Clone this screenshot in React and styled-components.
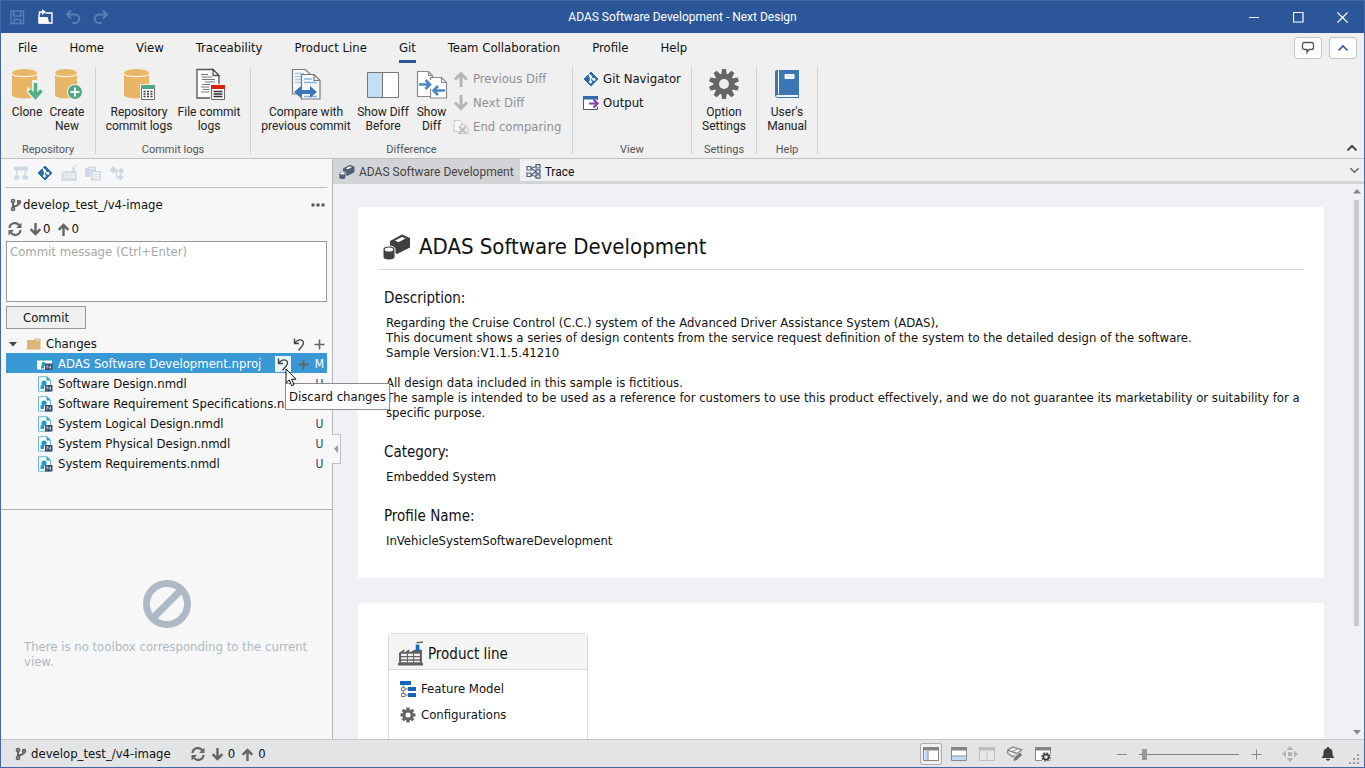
import React from "react";
import styled, { createGlobalStyle } from "styled-components";

const UI = `"DejaVu Sans Condensed", "DejaVu Sans", sans-serif`;
const SMALL = `Roboto, "Open Sans", sans-serif`;

const Global = createGlobalStyle`
  * { box-sizing: border-box; }
  body { margin: 0; overflow: hidden; }
  button, textarea, input { font: inherit; color: inherit; }
  button { background: none; border: 0; padding: 0; margin: 0; }
  svg { display: block; flex: none; }
`;

const Window = styled.div`
  display: grid;
  grid-template-rows: auto auto minmax(0, 1fr) auto;
  height: 100vh;
  border: 1px solid #3f68a5;
  font: 13px/20px ${UI};
  color: #111;
  background: #f0f0f0;
`;

/* title bar */
const TitleBar = styled.header`
  display: grid;
  grid-template-columns: 1fr auto 1fr;
  align-items: center;
  height: 32px;
  background: #2b579a;
  color: #fff;
  font: 12px/16px ${SMALL};
`;
const QuickAccess = styled.div`
  display: flex;
  gap: 12px;
  padding-left: 8px;
`;
const QuickButton = styled.button`
  color: ${(p) => (p.$dim ? "#5a7eb5" : "#fff")};
`;
const WindowButtons = styled.div`
  display: flex;
  justify-content: flex-end;
`;
const WindowButton = styled.button`
  display: grid;
  place-items: center;
  width: 44px;
  height: 32px;
`;

/* ribbon */
const Ribbon = styled.div`
  border-bottom: 1px solid #bfbfbf;
`;
const MenuRow = styled.nav`
  display: flex;
  height: 30px;
  padding-left: 1px;
`;
const MenuTab = styled.button`
  display: flex;
  flex-direction: column;
  justify-content: flex-end;
  gap: 2px;
  padding: 0 16px;
  &::after {
    content: "";
    height: 3px;
    background: ${(p) => (p.$active ? "#2b579a" : "transparent")};
  }
`;
const MenuTools = styled.div`
  display: flex;
  align-items: center;
  gap: 7px;
  margin-left: auto;
  padding-right: 7px;
`;
const ToolButton = styled.button`
  display: grid;
  place-items: center;
  width: 28px;
  height: 22px;
  background: #fff;
  border: 1px solid #c2c2c2;
  border-radius: 3px;
`;
const RibbonBody = styled.div`
  display: flex;
  height: 95px;
  padding: 4px 0;
`;
const Group = styled.section`
  display: grid;
  grid-template-rows: minmax(0, 1fr) 8px;
  width: ${(p) => p.$width}px;
  border-right: 1px solid #d2d2d2;
  font: 12px/14px ${SMALL};
`;
const GroupItems = styled.div`
  display: flex;
  justify-content: ${(p) => (p.$center ? "center" : "flex-start")};
  padding-left: ${(p) => (p.$center ? 0 : 5)}px;
`;
const GroupLabel = styled.h2`
  margin: 0;
  text-align: center;
  font: 11px/8px ${SMALL};
  color: #555;
`;
const BigButton = styled.button`
  display: flex;
  flex-direction: column;
  align-items: center;
  justify-content: flex-start;
  gap: 5px;
  width: ${(p) => p.$width}px;
  padding-top: 1px;
  color: #222;
  white-space: nowrap;
`;
const SmallList = styled.div`
  display: flex;
  flex-direction: column;
  font: 13px/24px ${UI};
`;
const SmallButton = styled.button`
  display: flex;
  align-items: center;
  gap: 4px;
  height: 24px;
  color: ${(p) => (p.disabled ? "#8f8f8f" : "#111")};
  white-space: nowrap;
`;
const CollapseButton = styled.button`
  align-self: flex-end;
  margin: 0 6px 0 auto;
`;

/* body */
const Body = styled.div`
  display: grid;
  grid-template-columns: 332px minmax(0, 1fr);
  grid-template-rows: minmax(0, 1fr);
  min-height: 0;
`;
const Side = styled.aside`
  position: relative;
  z-index: 2;
  display: grid;
  grid-template-rows: 351px minmax(0, 1fr);
  border-right: 1px solid #b5b5b8;
  background: #f7f7f7;
`;
const GitPane = styled.div`
  padding: 0 5px;
  border-bottom: 1px solid #b0b0b0;
`;
const SideTools = styled.div`
  display: flex;
  align-items: center;
  gap: 8px;
  height: 29px;
  padding: 0 7px;
  border-bottom: 1px solid #bdbdbd;
`;
const BranchRow = styled.div`
  display: flex;
  align-items: center;
  gap: 1px;
  height: 33px;
  padding: 0 2px 0 4px;
`;
const MoreButton = styled.button`
  margin-left: auto;
`;
const SyncRow = styled.div`
  display: flex;
  align-items: center;
  height: 20px;
  padding: 0 2px 4px;
  gap: 7px;
`;
const SyncButton = styled.button`
  display: flex;
  align-items: center;
  gap: ${(p) => p.$gap ?? 1}px;
  color: #111;
`;
const Message = styled.textarea`
  display: block;
  width: 100%;
  height: 61px;
  padding: 0 3px;
  border: 1px solid #999;
  border-radius: 0;
  background: #fff;
  resize: none;
  outline: 0;
  &::placeholder { color: #a8a8a8; }
`;
const CommitButton = styled.button`
  width: 80px;
  height: 23px;
  margin: 4px 0;
  border: 1px solid #999;
  background: #f0f0f0;
`;
const Tree = styled.ul`
  margin: 0;
  padding: 0;
  list-style: none;
`;
const TreeRow = styled.li`
  position: relative;
  display: flex;
  align-items: center;
  gap: 5px;
  height: 20px;
  padding: 2px 0 0 ${(p) => (p.$child ? 31 : 3)}px;
  background: ${(p) => (p.$selected ? "#3998d6" : "transparent")};
  color: ${(p) => (p.$selected ? "#fff" : "#111")};
`;
const Twisty = styled.button`
  padding-right: 5px;
`;
const FileName = styled.span`
  flex: 1;
  min-width: 0;
  overflow: hidden;
  white-space: nowrap;
`;
const RowActions = styled.span`
  display: flex;
  align-items: center;
  gap: 4px;
`;
const RowButton = styled.button`
  display: grid;
  place-items: center;
  width: 16px;
  height: 16px;
  background: ${(p) => (p.$hot ? "#e9f3fa" : "transparent")};
  color: #555;
`;
const Status = styled.span`
  width: 16px;
  margin-left: ${(p) => (p.$tight ? -4 : 0)}px;
  text-align: center;
  font-size: 12px;
  color: ${(p) => (p.$selected ? "#fff" : "#1d4a66")};
`;
const Tooltip = styled.div`
  position: absolute;
  left: 279px;
  top: 30px;
  z-index: 3;
  padding: 2px 3px;
  border: 1px solid #8c8c8c;
  background: #fff;
  color: #111;
  line-height: 21px;
  white-space: nowrap;
`;
const Pointer = styled.svg`
  position: absolute;
  left: 279px;
  top: 15px;
  z-index: 4;
`;
const Toolbox = styled.div`
  display: flex;
  flex-direction: column;
  align-items: center;
  padding: 70px 23px 0;
  gap: 11px;
  color: #adb9c6;
  line-height: 15px;
`;
const ToolboxText = styled.p`
  margin: 0;
  width: 100%;
`;
const Handle = styled.button`
  position: absolute;
  left: 100%;
  top: 275px;
  display: grid;
  place-items: center;
  width: 9px;
  height: 30px;
  border: 1px solid #bdbdbd;
  border-left: 0;
  background: #f7f7f7;
`;

const Main = styled.main`
  display: grid;
  grid-template-rows: 25px minmax(0, 1fr);
  min-width: 0;
`;
const DocTabs = styled.div`
  display: flex;
  border-bottom: 3px solid #d3d4d7;
  font: 12px/22px ${SMALL};
`;
const DocTab = styled.button`
  display: flex;
  align-items: center;
  gap: 4px;
  height: 22px;
  padding: 3px 6px 0;
  background: ${(p) => (p.$active ? "#d3d4d7" : "transparent")};
  color: ${(p) => (p.$active ? "#444" : "#111")};
`;
const TabMenu = styled.button`
  margin: 0 4px 0 auto;
`;
const Canvas = styled.div`
  display: grid;
  grid-template-columns: minmax(0, 1fr) 13px;
  grid-template-rows: minmax(0, 1fr);
  min-height: 0;
  background: #f0f1f5;
`;
const Pages = styled.div`
  overflow: hidden;
  padding: 23px 27px 0 25px;
`;
const Page = styled.article`
  margin-bottom: 25px;
  padding: 0 20px 30px;
  border-radius: 2px;
  background: #fff;
`;
const PageHead = styled.header`
  display: flex;
  align-items: center;
  gap: 8px;
  height: 63px;
  padding: 18px 5px 0;
  border-bottom: 1px solid #dcdcdc;
`;
const PageTitle = styled.h1`
  margin: 0;
  font: 22px/44px ${UI};
`;
const Field = styled.section`
  padding-left: 6px;
  margin-top: ${(p) => (p.$first ? 18 : 22)}px;
`;
const FieldName = styled.h2`
  margin: 0 0 7px;
  font: 15px/20px ${UI};
`;
const FieldText = styled.p`
  margin: 0;
  padding-left: 2px;
  line-height: 15px;
  white-space: pre-line;
`;
const ShelfPage = styled(Page)`
  padding: 30px;
`;
const Shelf = styled.section`
  width: 200px;
  height: 160px;
  border: 1px solid #dadada;
  border-radius: 4px;
`;
const ShelfHead = styled.h2`
  display: flex;
  align-items: center;
  gap: 5px;
  height: 36px;
  margin: 0 0 6px;
  padding: 4px 9px 0;
  border-bottom: 1px solid #dadada;
  background: #f5f5f5;
  font: 15px/30px ${UI};
`;
const ShelfLink = styled.a`
  display: flex;
  align-items: center;
  gap: 5px;
  height: 26px;
  padding-left: 11px;
  color: #111;
  text-decoration: none;
`;
const ScrollTrack = styled.div`
  display: flex;
  flex-direction: column;
  align-items: center;
  gap: 6px;
  padding: 5px 2px 4px 0;
`;
const ScrollThumb = styled.div`
  flex: 0 1 426px;
  width: 5px;
  margin-bottom: auto;
  background: #c9cacd;
`;

/* status bar */
const StatusBar = styled.footer`
  display: flex;
  align-items: center;
  height: 28px;
  padding-top: 1px;
  border-top: 1px solid #c6c6c6;
  background: #e3e4e6;
`;
const StatusLeft = styled.div`
  display: flex;
  align-items: center;
  gap: 4px;
  padding-left: 14px;
`;
const StatusSync = styled.div`
  display: flex;
  align-items: center;
  gap: 6px;
  padding-left: 20px;
`;
const StatusRight = styled.div`
  display: flex;
  align-items: center;
  margin-left: auto;
  padding-right: 4px;
`;
const ViewButton = styled.button`
  display: grid;
  place-items: center;
  width: 22px;
  height: 22px;
  margin-right: 6px;
  border: 1px solid ${(p) => (p.$on ? "#adadad" : "transparent")};
  border-radius: 2px;
  background: ${(p) => (p.$on ? "#f0f0f0" : "transparent")};
`;
const Zoom = styled.div`
  display: flex;
  align-items: center;
  gap: 12px;
  margin: 0 20px 0 57px;
`;
const ZoomSlider = styled.input`
  appearance: none;
  width: 100px;
  height: 12px;
  margin: 0;
  background: linear-gradient(#808080, #808080) center / 100% 1px no-repeat;
  &::-webkit-slider-thumb {
    appearance: none;
    width: 5px;
    height: 11px;
    background: #999;
  }
`;
const BellButton = styled.button`
  margin: 0 14px 0 23px;
`;
const Corner = styled.svg`
  align-self: flex-end;
`;

/* ---------- icons ---------- */
const Svg = ({ w = 16, h = w, children, ...rest }) => (
  <svg width={w} height={h} viewBox={`0 0 ${w} ${h}`} fill="none" aria-hidden="true" {...rest}>
    {children}
  </svg>
);

const SaveIcon = () => (
  <Svg>
    <path d="M2 2h12.500v12.500H2zM4.500 2v5h7.500V2M5 14.500v-4h6.500v4" stroke="currentColor" strokeWidth="1.500" />
  </Svg>
);
const OpenIcon = () => (
  <Svg>
    <path d="M2 5.500V14h13V4H8.500" stroke="currentColor" strokeWidth="1.400" />
    <path d="M1.500 8h9l2 6.500H2z" fill="currentColor" />
    <path d="M2.500 6V3h4" stroke="currentColor" strokeWidth="1.500" />
    <path d="M5 0l4 3-4 3z" fill="currentColor" />
  </Svg>
);
const UndoIcon = ({ flip }) => (
  <Svg>
    <g transform={flip ? "matrix(-1 0 0 1 16 0)" : undefined} stroke="currentColor" strokeWidth="2">
      <path d="M6 1.500L2 5.500l4 4M2 5.500h8a4 4 0 0 1 0 8.500H7.500" />
    </g>
  </Svg>
);
const Barrel = ({ x = 0, w = 25 }) => (
  <g>
    <path d={`M${x} 6v21c0 4.500 ${w} 4.500 ${w} 0V6z`} fill="#e9b667" />
    <ellipse cx={x + w / 2} cy="5" rx={w / 2} ry="4" fill="#e9b667" />
    <path d={`M${x} 6c1 3.500 ${w - 1} 3.500 ${w} 0`} stroke="#fdf3e2" strokeWidth="1.200" />
  </g>
);
const CloneIcon = () => (
  <Svg w={32}>
    <Barrel x={1} />
    <path d="M22 13h5v10l3-2.500 2 3L24.500 32 17 24v-3.500l5 3z" stroke="#f0f0f0" strokeWidth="2" fill="#f0f0f0" />
    <path d="M24.500 15v14M18.500 22.500l6 6.500 6-6.500" stroke="#4fb283" strokeWidth="3.600" />
  </Svg>
);
const CreateIcon = () => (
  <Svg w={32}>
    <Barrel x={4} w={22} />
    <circle cx="24" cy="24" r="8" fill="#f0f0f0" />
    <circle cx="24" cy="24" r="7" fill="#4fa985" />
    <path d="M24 19.500v9M19.500 24h9" stroke="#fff" strokeWidth="1.800" />
  </Svg>
);
const MiniTable = ({ color, dots }) => (
  <g>
    <path d="M17 16h15v16H17z" fill="#f0f0f0" />
    <path d="M18.500 18.500h13v13h-13z" fill="#fff" stroke="#6a6a6a" />
    <path d="M18 17h14v4H18z" fill={color} />
    <path d="M20.500 23.500h9M20.500 26h9M20.500 28.500h9" stroke="#333" strokeWidth="1.300" strokeDasharray={dots ? "2 1.500" : undefined} />
  </g>
);
const RepoLogIcon = () => (
  <Svg w={32}>
    <Barrel x={1} />
    <MiniTable color="#4fa985" dots />
  </Svg>
);
const FileLogIcon = () => (
  <Svg w={32}>
    <path d="M4 1.500h16l6 6V30H4z" fill="#fff" stroke="#555" strokeWidth="1.300" />
    <path d="M20 1.500v6h6z" fill="#fff" stroke="#555" strokeWidth="1.300" />
    <path d="M8 6.500h7M9 9h10M9 11.500h13M12 14h10M9 16.500h8M8 19h8M10 21.500h6M8 24h8" stroke="#777" strokeWidth="1.200" />
    <MiniTable color="#d9230f" />
  </Svg>
);
const CompareIcon = () => (
  <Svg w={32}>
    <path d="M2.500 1.500h13l5 5V26h-18z" fill="#f4f9fd" stroke="#777" strokeWidth="1.200" />
    <path d="M5 5.500h9M5 8.500h7M5 11.500h6M5 14.500h6" stroke="#a9c9e4" strokeWidth="1.600" />
    <path d="M11.500 6.500H24l6 6V31H11.500z" fill="#f4f9fd" stroke="#777" strokeWidth="1.200" />
    <path d="M24 6.500v6h6" stroke="#777" strokeWidth="1.200" />
    <path d="M14 11h8M14 14.500h13M14 28.500h13" stroke="#8ab4d8" strokeWidth="1.600" />
    <path d="M4 24l7-6v4h9v-4l7 6-7 6v-4h-9v4z" fill="#3c78b8" />
  </Svg>
);
const BeforeIcon = () => (
  <Svg w={32}>
    <path d="M.5 4.500h31v25H.5z" fill="#fff" stroke="#777" />
    <path d="M1 5h15v24H1z" fill="#c2e0f2" />
    <path d="M15.500 5v24" stroke="#777" />
  </Svg>
);
const DiffIcon = () => (
  <Svg w={32}>
    <path d="M1.500 3.500h11l4 4v21h-15z" fill="#fff" stroke="#888" strokeWidth="1.200" />
    <path d="M12.500 3.500v4h4" stroke="#888" strokeWidth="1.200" />
    <path d="M14.500 9.500h11l5 5V30h-16z" fill="#fff" stroke="#888" strokeWidth="1.200" />
    <path d="M25.500 9.500v5h5" stroke="#888" strokeWidth="1.200" />
    <path d="M12 12h5v9h-5z" fill="#fff" />
    <path d="M3 16.500h11M9.500 12l4.500 4.500L9.500 21" stroke="#4a86c5" strokeWidth="2.600" />
    <path d="M29 22.500H17M22 18l-4.500 4.500L22 27" stroke="#4a86c5" strokeWidth="2.600" />
  </Svg>
);
const ArrowIcon = ({ down, size = 16, color = "#b5b5b5", sw = 3 }) => (
  <svg width={size} height={size} viewBox="0 0 16 16" fill="none" aria-hidden="true">
    <path
      d={down ? "M8 0v13M2 7.500l6 6 6-6" : "M8 16V3M2 8.500l6-6 6 6"}
      stroke={color}
      strokeWidth={sw}
    />
  </svg>
);
const EndIcon = () => (
  <Svg>
    <path d="M1 1.500h6l2 2v9H1z" fill="#f7f7f7" stroke="#c8c8c8" />
    <path d="M7 5.500h5l3 3v6H5" fill="#eee" stroke="#c8c8c8" />
    <path d="M6 7.500l7 7M13 7.500l-7 7" stroke="#bdbdbd" strokeWidth="2" />
  </Svg>
);
const GitIcon = () => (
  <Svg>
    <path d="M8 1l7 7-7 7-7-7z" fill="#2d6ea8" stroke="#2d6ea8" strokeLinejoin="round" />
    <path d="M5.500 3l2 2v6M7.500 5.500l3 3" stroke="#fff" strokeWidth="1.200" />
    <circle cx="7.500" cy="5.500" r="1.300" fill="#fff" />
    <circle cx="7.500" cy="11" r="1.400" fill="#fff" />
    <circle cx="11" cy="8.500" r="1.400" fill="#fff" />
  </Svg>
);
const OutputIcon = () => (
  <Svg>
    <path d="M.5 2.500h14v12H.5z" fill="#fff" stroke="#555" />
    <path d="M0 1h15v3.500H0z" fill="#2f6cab" />
    <path d="M13 5h3v7h-3z" fill="#f0f0f0" />
    <path d="M6 8.500h9M10.500 4.500l4 4-4 4" stroke="#8240a8" strokeWidth="2.200" />
  </Svg>
);
const Cog = ({ size, color = "#666", teeth = 8, hole = 5, bg = "#f0f0f0" }) => (
  <svg width={size} height={size} viewBox="0 0 32 32" aria-hidden="true">
    {Array.from({ length: teeth }, (_, i) => (
      <path key={i} d={teeth > 8 ? "M14 1h4l1 7h-6z" : "M13 1h6l1 7h-8z"} fill={color} transform={`rotate(${(360 / teeth) * i} 16 16)`} />
    ))}
    <circle cx="16" cy="16" r="10.500" fill={color} />
    <circle cx="16" cy="16" r={hole} fill={bg} />
  </svg>
);
const BookIcon = () => (
  <Svg w={32}>
    <path d="M6 2h22v28H7.500C5 30 4 28.500 4 27V4c0-1.200.8-2 2-2z" fill="#3a76b4" />
    <path d="M7.500 2v24" stroke="#fff" strokeWidth="1" />
    <path d="M5.500 28h21.500" stroke="#f4f4f4" strokeWidth="2" />
    <path d="M14 6.500h9v4h-9z" fill="#e3eaf6" stroke="#fff" />
  </Svg>
);
const BubbleIcon = () => (
  <Svg>
    <path d="M4.500 2.500h7a2 2 0 0 1 2 2v3a2 2 0 0 1-2 2H9L7 12.500v-3H4.500a2 2 0 0 1-2-2v-3a2 2 0 0 1 2-2z" stroke="#555" strokeWidth="1.300" />
  </Svg>
);
const Chevron = ({ up, color, w = 12, sw = 1.6 }) => (
  <svg width={w} height="12" viewBox="0 0 12 12" fill="none" aria-hidden="true">
    <path d={up ? "M1.500 8.500L6 4l4.500 4.500" : "M1.500 4L6 8.500 10.500 4"} stroke={color} strokeWidth={sw} />
  </svg>
);
const HierarchyIcon = () => (
  <Svg>
    <path d="M1 1.500h14v4H1zM1 10.500h5.500v4H1zM9.500 10.500H15v4H9.500z" fill="#ccd9e5" />
    <path d="M3.700 5v6M12.300 5v6" stroke="#ccd9e5" strokeWidth="1.300" />
  </Svg>
);
const FactoryIcon = ({ w = 16, color = "#ccd9e5", chimney = color, grid = "#f7f7f7" }) => (
  <svg width={w} height={w} viewBox="0 0 24 24" fill="none" aria-hidden="true">
    <path d="M0 23.500V21h1V11.500L6 8v3l5-3v3l5-2.500h7V21h1v2.500z" fill={color} />
    <path d="M3 12.300h18v2H3zM3 15.600h18v2H3zM3 18.900h18v1.500H3z" fill={grid} />
    <path d="M9 12v9M15 12v9" stroke={color} />
    <path d="M17 3.500h3.500v6H17z" fill={chimney} />
    <path d="M18 2c2-1.500 3 0 6-1" stroke={color} strokeWidth="1.400" />
  </svg>
);
const CopyIcon = () => (
  <Svg>
    <path d="M0 3h3.500V1.500H11V6H5.500v6H0z" fill="#ccd9e5" />
    <path d="M4.500 3.700H10" stroke="#f7f7f7" />
    <path d="M6.700 6.700h8.500v8H6.700z" stroke="#ccd9e5" strokeWidth="1.500" fill="#f7f7f7" />
    <path d="M8 9.500h6M8 12h6" stroke="#ccd9e5" strokeWidth="1.200" />
  </Svg>
);
const NodesIcon = () => (
  <Svg>
    <path d="M4.500 1L9 5.500l-2.500 2H3L.5 5z" fill="#ccd9e5" />
    <path d="M7 5.500h4M7.500 6v6H11" stroke="#ccd9e5" strokeWidth="1.300" />
    <path d="M12 3l3.500 3L12 9 9 6zM11.500 9l3.500 3-3.500 3.500L8.500 12z" fill="#ccd9e5" />
  </Svg>
);
const BranchIcon = () => (
  <Svg w={12} h={14}>
    <circle cx="3" cy="3" r="1.500" stroke="#606060" strokeWidth="1.700" />
    <circle cx="3" cy="11" r="1.500" stroke="#606060" strokeWidth="1.700" />
    <circle cx="9" cy="4" r="1.400" stroke="#606060" strokeWidth="1.700" />
    <path d="M3 4.500v5M9 5.500c0 2.500-5 2-5.500 4" stroke="#606060" strokeWidth="2" />
  </Svg>
);
const RefreshIcon = () => (
  <Svg w={14}>
    <path d="M1.500 6a5.300 5.300 0 0 1 9.700-2.500M12.500 8a5.300 5.300 0 0 1-9.700 2.500" stroke="#666" strokeWidth="2.200" />
    <path d="M13.500.5v5.500H8zM.5 13.500V8H6z" fill="#666" />
  </Svg>
);
const FolderIcon = () => (
  <Svg w={14} h={12}>
    <path d="M0 2h7l1-1.500h5.500V11.500H0z" fill="#dcb67a" />
    <path d="M8.500 2h4" stroke="#f4e4c8" />
  </Svg>
);
const RevertIcon = () => (
  <Svg w={12} h={13}>
    <path d="M1.500 .5v5H6M2 5C4.500 1 10.500.8 10.500 5c0 3-3.500 4.500-4.800 7.500" stroke="#444" strokeWidth="1.400" />
  </Svg>
);
const PlusIcon = ({ color = "#666", w = 11, sw = 1.6 }) => (
  <svg width={w} height={w} viewBox="0 0 11 11" aria-hidden="true">
    <path d="M5.500 .5v10M.5 5.500h10" stroke={color} strokeWidth={sw} />
  </svg>
);
const ModelIcon = () => (
  <Svg>
    <path d="M1.500.7H10l3.500 3.500v11h-12z" fill="#fff" stroke="#6fb6cf" />
    <path d="M9.500 0v4.500H14z" fill="#2aa0c6" />
    <circle cx="7" cy="7" r="2.600" fill="#1f9cc4" />
    <path d="M3.500 13V9.500L7 8v5z" fill="#1f9cc4" />
    <path d="M8 9h7.500v6.500H8z" fill="#3a4c6b" />
    <path d="M10 13.500v-3l3.500 3v-3" stroke="#c9d2e2" strokeWidth=".9" />
  </Svg>
);
const ProjectIcon = () => (
  <Svg>
    <path d="M0 2h15v11.500H0z" fill="#fff" />
    <path d="M0 2h15v2.500H0z" fill="#23a3c4" />
    <circle cx="6.500" cy="8" r="2" fill="#1f9cc4" />
    <path d="M4 12.500V9.500h3v3z" fill="#1f9cc4" />
    <path d="M8 7.500h7.500v6.500H8z" fill="#3a4c6b" />
    <path d="M10 12.500v-3l3.500 3v-3" stroke="#c9d2e2" strokeWidth=".9" />
  </Svg>
);
const BlocksIcon = ({ w = 14, color = "#4d6078" }) => (
  <svg width={w} height={w} viewBox="0 0 28 28" fill="none" aria-hidden="true">
    <path d="M7 8l12-6.500L27 5v9.500L14 21l-7-3z" fill={color} />
    <path d="M12 7.500l7-3.500 3.500 1.500-7 3.700z" fill="#fff" />
    <path d="M0 16v8c0 4 12 4 12 0v-8c0-4-12-4-12 0z" fill={color} stroke="#fff" />
    <ellipse cx="6" cy="16.500" rx="4.200" ry="2" fill="#fff" />
  </svg>
);
const TraceIcon = () => (
  <Svg w={15}>
    <path d="M1 2.500h4v3.500H1zM1 9h4v3.500H1zM10 .7h4v3.300h-4zM10 5.800h4v3.300h-4zM10 10.900h4v3.300h-4z" stroke="#4d6078" strokeWidth="1.200" />
    <path d="M5 4.500l5-2M5 4.500l5 3M5 11l5-3.500M5 11l5 1.500" stroke="#4d6078" strokeWidth="1.100" />
  </Svg>
);
const FeatureIcon = () => (
  <Svg>
    <path d="M0 0h11v4H0zM8 6h8v4H8zM8 12h8v4H8z" fill="#1565b8" />
    <path d="M1.500 6.700h3.500v3H1.500zM1.500 12.500h3.500v3H1.500zM3.200 4v2.500M3.200 10v2.500M5 8h3M5 14h3" stroke="#777" />
  </Svg>
);
const LayoutIcon = ({ kind }) => (
  <Svg>
    <path d="M.5 1.500h15v13H.5z" fill={kind === "split" ? "#e8e8e8" : "#fff"} stroke={kind === "split" ? "#c0c0c0" : "#888"} />
    <path d="M0 1h16v3.500H0z" fill={kind === "split" ? "#bdbdbd" : "#858585"} />
    {kind === "left" && <path d="M1.500 5h3v9h-3z" fill="#b9dcff" />}
    {kind === "left" && <path d="M5 5v9" stroke="#888" />}
    {kind === "bottom" && <path d="M1 10.500h14V14H1z" fill="#b9dcff" />}
    {kind === "bottom" && <path d="M1 10h14" stroke="#888" />}
    {kind === "split" && <path d="M8 5v9" stroke="#c0c0c0" />}
    {kind === "cog" && <circle cx="11" cy="11" r="5.500" fill="#e3e4e6" />}
    {kind === "cog" && <circle cx="11" cy="11" r="2.600" stroke="#333" strokeWidth="1.500" />}
    {kind === "cog" && <circle cx="11" cy="11" r="3.900" stroke="#333" strokeWidth="1.400" strokeDasharray="1.500 1.560" />}
  </Svg>
);
const SketchIcon = () => (
  <Svg>
    <path d="M.7 4L6 1l9 3-5 3.500zM.7 4v3.500L6 10.500l2-1M2 8l4 3" fill="#f4f4f4" stroke="#808080" strokeWidth="1.200" />
    <path d="M5 6l5-3" stroke="#808080" />
    <path d="M6 15.500l1-4 6-5.500 2.500 3-6 5.500z" fill="#757575" stroke="#e3e4e6" strokeWidth=".7" />
  </Svg>
);
const MoveIcon = () => (
  <Svg>
    <path d="M8 0l3.500 4h-7zM8 16l3.500-4h-7zM0 8l4-3.500v7zM16 8l-4-3.500v7zM6 6h4v4H6z" fill="#b3b3b3" />
  </Svg>
);
const BellIcon = () => (
  <Svg w={14}>
    <path d="M7 0c1 0 1.300.6 1.300 1.300C11 2 11.500 4 11.500 6c0 2.500 1 3.700 2 5H.5c1-1.300 2-2.500 2-5 0-2 .5-4 3.200-4.700C5.700.6 6 0 7 0zM5 11.800h4c0 1-1 1.900-2 1.900s-2-.9-2-1.900z" fill="#404040" />
  </Svg>
);

const files = [
  "Software Design.nmdl",
  "Software Requirement Specifications.nmdl",
  "System Logical Design.nmdl",
  "System Physical Design.nmdl",
  "System Requirements.nmdl",
];
const menus = ["File", "Home", "View", "Traceability", "Product Line", "Git", "Team Collaboration", "Profile", "Help"];

const description = `Regarding the Cruise Control (C.C.) system of the Advanced Driver Assistance System (ADAS),
This document shows a series of design contents from the service request definition of the system to the detailed design of the software.
Sample Version:V1.1.5.41210

All design data included in this sample is fictitious.
The sample is intended to be used as a reference for customers to use this product effectively, and we do not guarantee its marketability or suitability for a specific purpose.`;

const Big = ({ icon, width, lines }) => (
  <BigButton $width={width}>
    {icon}
    <span>
      {lines[0]}
      {lines[1] && <br />}
      {lines[1]}
    </span>
  </BigButton>
);
const RibbonGroup = ({ label, width, center, children }) => (
  <Group $width={width}>
    <GroupItems $center={center}>{children}</GroupItems>
    <GroupLabel>{label}</GroupLabel>
  </Group>
);

export default function App() {
  return (
    <Window>
      <Global />
      <TitleBar>
        <QuickAccess>
          <QuickButton $dim aria-label="Save"><SaveIcon /></QuickButton>
          <QuickButton aria-label="Open"><OpenIcon /></QuickButton>
          <QuickButton $dim aria-label="Undo"><UndoIcon /></QuickButton>
          <QuickButton $dim aria-label="Redo"><UndoIcon flip /></QuickButton>
        </QuickAccess>
        <span>ADAS Software Development - Next Design</span>
        <WindowButtons>
          <WindowButton aria-label="Minimize"><Svg w={11}><path d="M0 5.500h10" stroke="#fff" /></Svg></WindowButton>
          <WindowButton aria-label="Maximize"><Svg w={11}><path d="M.5 .5h9.500v9.500H.5z" stroke="#fff" strokeWidth="1.200" /></Svg></WindowButton>
          <WindowButton aria-label="Close"><Svg w={11}><path d="M.5 .5l10 10M10.500 .5l-10 10" stroke="#fff" strokeWidth="1.200" /></Svg></WindowButton>
        </WindowButtons>
      </TitleBar>

      <Ribbon>
        <MenuRow>
          {menus.map((m) => (
            <MenuTab key={m} $active={m === "Git"}>{m}</MenuTab>
          ))}
          <MenuTools>
            <ToolButton aria-label="Feedback"><BubbleIcon /></ToolButton>
            <ToolButton aria-label="Collapse"><Chevron up color="#2b579a" /></ToolButton>
          </MenuTools>
        </MenuRow>
        <RibbonBody>
          <RibbonGroup label="Repository" width={95}>
            <Big icon={<CloneIcon />} width={42} lines={["Clone"]} />
            <Big icon={<CreateIcon />} width={38} lines={["Create", "New"]} />
          </RibbonGroup>
          <RibbonGroup label="Commit logs" width={155}>
            <Big icon={<RepoLogIcon />} width={76} lines={["Repository", "commit logs"]} />
            <Big icon={<FileLogIcon />} width={64} lines={["File commit", "logs"]} />
          </RibbonGroup>
          <RibbonGroup label="Difference" width={322}>
            <Big icon={<CompareIcon />} width={100} lines={["Compare with", "previous commit"]} />
            <Big icon={<BeforeIcon />} width={54} lines={["Show Diff", "Before"]} />
            <Big icon={<DiffIcon />} width={43} lines={["Show", "Diff"]} />
            <SmallList>
              <SmallButton disabled><ArrowIcon />Previous Diff</SmallButton>
              <SmallButton disabled><ArrowIcon down />Next Diff</SmallButton>
              <SmallButton disabled><EndIcon />End comparing</SmallButton>
            </SmallList>
          </RibbonGroup>
          <RibbonGroup label="View" width={119} center>
            <SmallList>
              <SmallButton><GitIcon />Git Navigator</SmallButton>
              <SmallButton><OutputIcon />Output</SmallButton>
            </SmallList>
          </RibbonGroup>
          <RibbonGroup label="Settings" width={65} center>
            <Big icon={<Cog size={32} teeth={10} />} width={56} lines={["Option", "Settings"]} />
          </RibbonGroup>
          <RibbonGroup label="Help" width={61} center>
            <Big icon={<BookIcon />} width={56} lines={["User's", "Manual"]} />
          </RibbonGroup>
          <CollapseButton aria-label="Collapse ribbon"><Chevron up color="#222" /></CollapseButton>
        </RibbonBody>
      </Ribbon>

      <Body>
        <Side>
          <GitPane>
            <SideTools>
              <button aria-label="Model"><HierarchyIcon /></button>
              <button aria-label="Git"><GitIcon /></button>
              <button aria-label="Product line"><FactoryIcon /></button>
              <button aria-label="Files"><CopyIcon /></button>
              <button aria-label="Relations"><NodesIcon /></button>
            </SideTools>
            <BranchRow>
              <BranchIcon />
              <span>develop_test_/v4-image</span>
              <MoreButton aria-label="More">
                <Svg w={14} h={4}><path d="M.5.5h3v3h-3zM5.500.5h3v3h-3zM10.500.5h3v3h-3z" fill="#555" /></Svg>
              </MoreButton>
            </BranchRow>
            <SyncRow>
              <SyncButton aria-label="Refresh"><RefreshIcon /></SyncButton>
              <SyncButton><ArrowIcon down size={13} color="#666" />0</SyncButton>
              <SyncButton><ArrowIcon size={13} color="#666" />0</SyncButton>
            </SyncRow>
            <Message aria-label="Commit message" placeholder="Commit message (Ctrl+Enter)" />
            <CommitButton>Commit</CommitButton>
            <Tree>
              <TreeRow>
                <Twisty aria-label="Collapse changes">
                  <Svg w={8} h={5}><path d="M0 0h8L4 4.500z" fill="#444" /></Svg>
                </Twisty>
                <FolderIcon />
                <FileName>Changes</FileName>
                <RowActions>
                  <RowButton aria-label="Discard all changes"><RevertIcon /></RowButton>
                  <RowButton aria-label="Stage all changes"><PlusIcon /></RowButton>
                </RowActions>
              </TreeRow>
              <TreeRow $child $selected>
                <ProjectIcon />
                <FileName>ADAS Software Development.nproj</FileName>
                <RowActions>
                  <RowButton $hot aria-label="Discard changes"><RevertIcon /></RowButton>
                  <RowButton aria-label="Stage changes"><PlusIcon sw={2} /></RowButton>
                  <Status $tight $selected>M</Status>
                </RowActions>
                <Tooltip role="tooltip">Discard changes</Tooltip>
                <Pointer width="12" height="19" viewBox="0 0 12 19" aria-hidden="true">
                  <path d="M1 1v14l3.300-3 2.400 5.700 2.300-1-2.400-5.500H11z" fill="#fff" stroke="#111" />
                </Pointer>
              </TreeRow>
              {files.map((f) => (
                <TreeRow key={f} $child>
                  <ModelIcon />
                  <FileName>{f}</FileName>
                  <Status>U</Status>
                </TreeRow>
              ))}
            </Tree>
          </GitPane>
          <Toolbox>
            <Svg w={48}>
              <circle cx="24" cy="24" r="20.500" stroke="#adb9c6" strokeWidth="7" />
              <path d="M10 38L38 10" stroke="#adb9c6" strokeWidth="7" />
            </Svg>
            <ToolboxText>There is no toolbox corresponding to the current view.</ToolboxText>
          </Toolbox>
          <Handle aria-label="Collapse side pane">
            <Svg w={4} h={8}><path d="M4 0v8L0 4z" fill="#999" /></Svg>
          </Handle>
        </Side>

        <Main>
          <DocTabs>
            <DocTab $active><BlocksIcon w={16} />ADAS Software Development</DocTab>
            <DocTab><TraceIcon />Trace</DocTab>
            <TabMenu aria-label="Tab list"><Chevron color="#666" w={11} /></TabMenu>
          </DocTabs>
          <Canvas>
            <Pages>
              <Page>
                <PageHead>
                  <BlocksIcon w={28} color="#404040" />
                  <PageTitle>ADAS Software Development</PageTitle>
                </PageHead>
                <Field $first>
                  <FieldName>Description:</FieldName>
                  <FieldText>{description}</FieldText>
                </Field>
                <Field>
                  <FieldName>Category:</FieldName>
                  <FieldText>Embedded System</FieldText>
                </Field>
                <Field>
                  <FieldName>Profile Name:</FieldName>
                  <FieldText>InVehicleSystemSoftwareDevelopment</FieldText>
                </Field>
              </Page>
              <ShelfPage>
                <Shelf>
                  <ShelfHead>
                    <FactoryIcon w={25} color="#616161" chimney="#1565b8" grid="#f5f5f5" />
                    Product line
                  </ShelfHead>
                  <ShelfLink href="#feature-model"><FeatureIcon />Feature Model</ShelfLink>
                  <ShelfLink href="#configurations"><Cog size={16} bg="#fff" />Configurations</ShelfLink>
                </Shelf>
              </ShelfPage>
            </Pages>
            <ScrollTrack>
              <Svg w={8} h={5}><path d="M4 0l4 4.500H0z" fill="#888" /></Svg>
              <ScrollThumb />
              <Svg w={8} h={5}><path d="M0 0h8L4 4.500z" fill="#888" /></Svg>
            </ScrollTrack>
          </Canvas>
        </Main>
      </Body>

      <StatusBar>
        <StatusLeft>
          <BranchIcon />
          <span>develop_test_/v4-image</span>
        </StatusLeft>
        <StatusSync>
          <SyncButton aria-label="Refresh"><RefreshIcon /></SyncButton>
          <SyncButton $gap={4}><ArrowIcon down size={13} color="#666" />0</SyncButton>
          <SyncButton $gap={4}><ArrowIcon size={13} color="#666" />0</SyncButton>
        </StatusSync>
        <StatusRight>
          <ViewButton $on aria-label="Side pane"><LayoutIcon kind="left" /></ViewButton>
          <ViewButton aria-label="Bottom pane"><LayoutIcon kind="bottom" /></ViewButton>
          <ViewButton aria-label="Split view"><LayoutIcon kind="split" /></ViewButton>
          <ViewButton aria-label="Edit design"><SketchIcon /></ViewButton>
          <ViewButton aria-label="View settings"><LayoutIcon kind="cog" /></ViewButton>
          <Zoom>
            <button aria-label="Zoom out"><Svg w={10}><path d="M0 5.500h10" stroke="#888" /></Svg></button>
            <ZoomSlider type="range" min="0" max="100" defaultValue="3" aria-label="Zoom" />
            <button aria-label="Zoom in"><PlusIcon w={11} sw={1} color="#888" /></button>
          </Zoom>
          <button aria-label="Fit"><MoveIcon /></button>
          <BellButton aria-label="Notifications"><BellIcon /></BellButton>
          <Corner width="11" height="11" viewBox="0 0 11 11" aria-hidden="true">
            <path d="M8 0h2v2H8zM4 4h2v2H4zM8 4h2v2H8zM0 8h2v2H0zM4 8h2v2H4zM8 8h2v2H8z" fill="#999" />
          </Corner>
        </StatusRight>
      </StatusBar>
    </Window>
  );
}
